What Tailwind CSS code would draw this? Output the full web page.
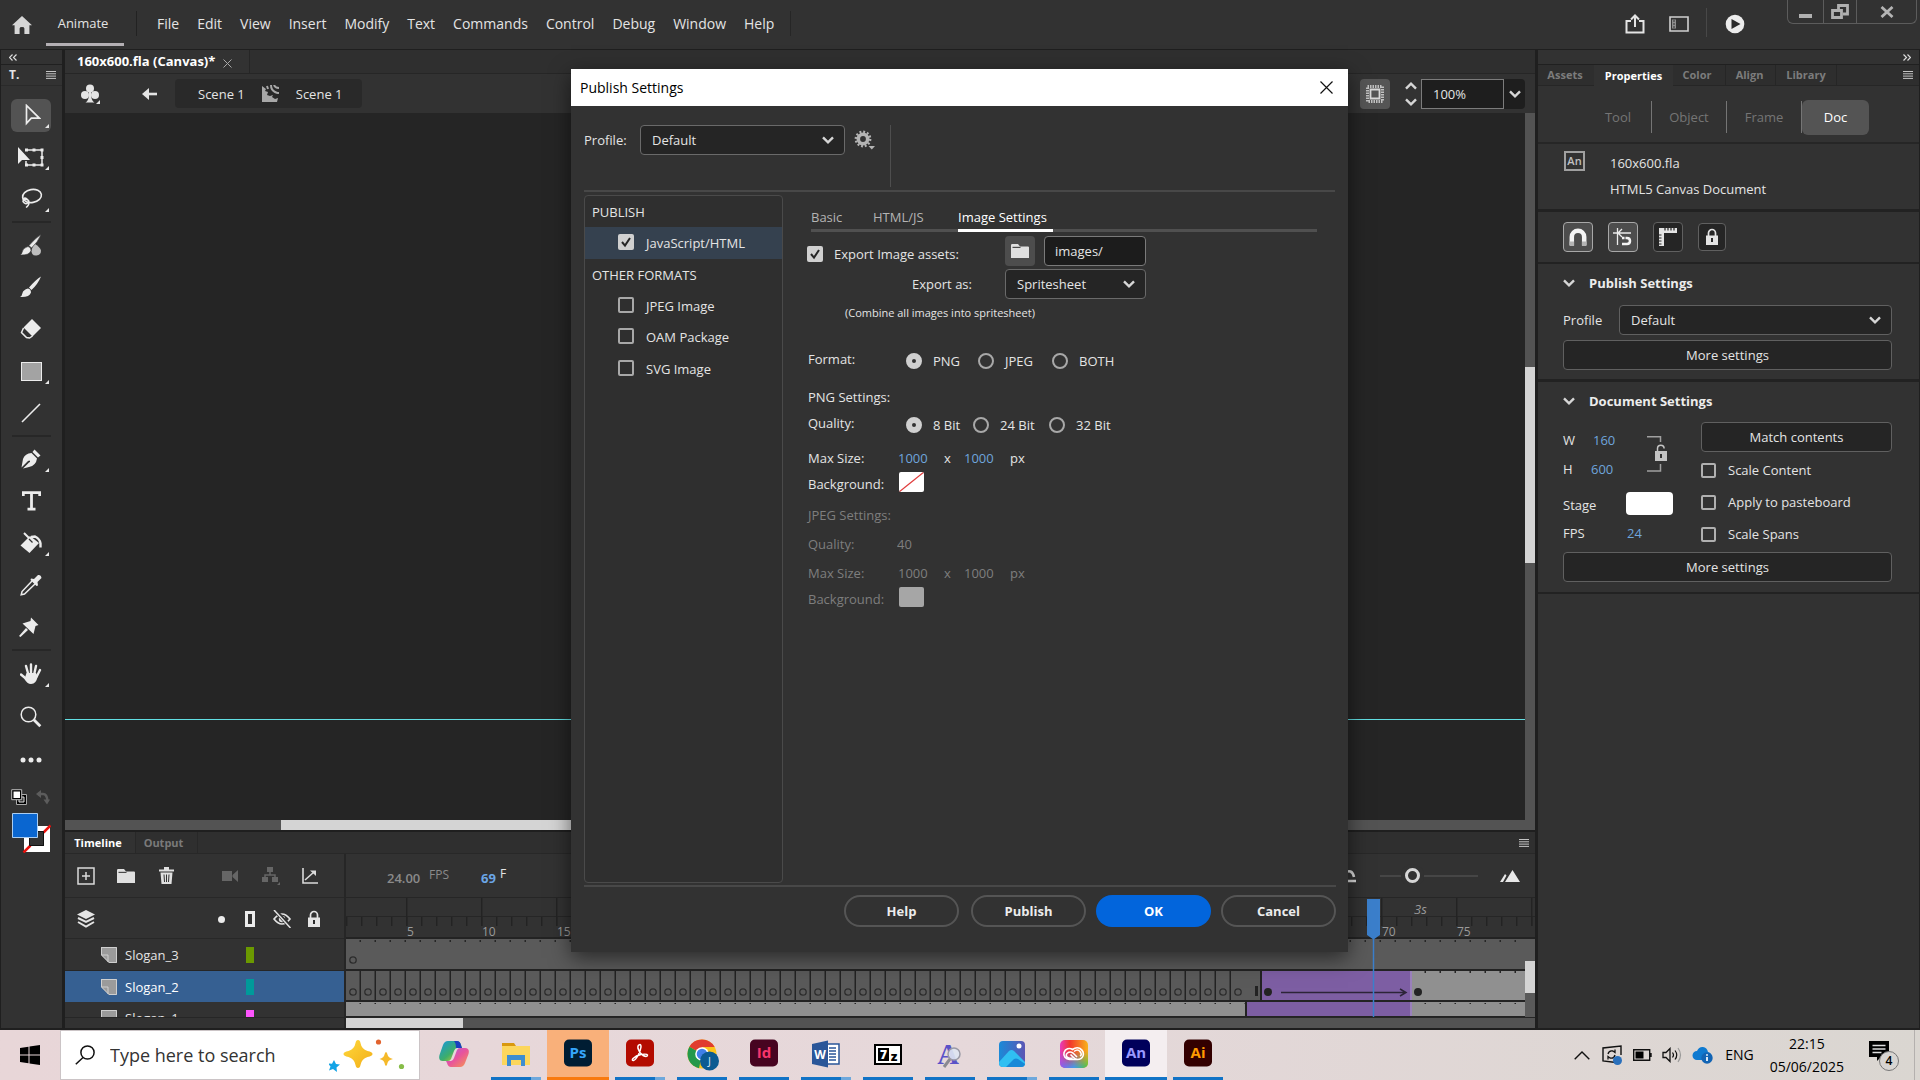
<!DOCTYPE html>
<html lang="en">
<head>
  <meta charset="UTF-8" />
  <meta name="viewport" content="width=device-width, initial-scale=1.0"/>
  <title>Animate - Publish Settings</title>
  <script src="https://cdn.jsdelivr.net/npm/@tailwindcss/browser@4"></script>
</head>
<body class="h-screen flex flex-col overflow-hidden bg-[#1f1f1f] text-[#e4e4e4] text-[13px] leading-5 font-['Open_Sans',sans-serif]">

  <!-- shared icons -->
  <svg class="hidden">
    <symbol id="chev" viewBox="0 0 12 8"><path d="M1 1.3l5 5 5-5" fill="none" stroke="#d6d6d6" stroke-width="2.4"/></symbol>
    <symbol id="check" viewBox="0 0 16 16"><path d="M4 8l3 3.6L12 4" fill="none" stroke="#252525" stroke-width="2"/></symbol>
    <symbol id="burger" viewBox="0 0 10 8"><path d="M0 .5h10M0 2.8h10M0 5.1h10M0 7.4h10" stroke="#c4c4c4" stroke-width="1"/></symbol>
    <symbol id="corner" viewBox="0 0 4 4"><path d="M4 0v4H0z" fill="#e8e8e8"/></symbol>
    <symbol id="folder" viewBox="0 0 20 16"><path d="M1 15V2.2Q1 1 2.2 1H8l2 2.6h8q1 0 1 1V15z" fill="#e0e0e0"/><path d="M2.5 4.4h8" stroke="#4a4a4a" stroke-width="1.2"/></symbol>
    <symbol id="lock" viewBox="0 0 14 18"><path d="M3.5 8V5a3.5 3.5 0 017 0v3" fill="none" stroke="#e4e4e4" stroke-width="1.7"/><path d="M1 7.5h12V17H1z" fill="#e4e4e4"/><path d="M7 10v4" stroke="#2a2a2a" stroke-width="2"/></symbol>
    <symbol id="layer" viewBox="0 0 16 16"><path d="M0 0h16v16H8L0 8z" fill="#9b9b9b"/><path d="M.5 0v8L8 15.5h7.5V.5H0M1 8h6v7" fill="none" stroke="#cfcfcf"/></symbol>
  </svg>

  <!-- menu bar -->
  <header class="h-[50px] shrink-0 flex bg-[#323232] border-b border-[#1f1f1f] text-sm">
    <a href="#" aria-label="Home" class="ml-3 mt-4">
      <svg class="w-5 h-[18px]" viewBox="0 0 20 18"><path d="M10 0L0 9.3h2.6V18h5v-5.600q0-1.400 2.400-1.400t2.400 1.400V18h5V9.300H20z" fill="#d6d6d6"/></svg>
    </a>
    <button class="ml-3.5 w-[78px] h-[46px] pt-1 pr-1 text-[13px] border-b-3 border-[#b4b0b4]">Animate</button>
    <div class="ml-3 mt-[11px] h-[25px] w-px bg-[#222]"></div>
    <nav class="ml-5 h-12 flex items-center gap-[18px]">
      <a href="#">File</a><a href="#">Edit</a><a href="#">View</a><a href="#">Insert</a><a href="#">Modify</a><a href="#">Text</a><a href="#">Commands</a><a href="#">Control</a><a href="#">Debug</a><a href="#">Window</a><a href="#">Help</a>
    </nav>
    <div class="ml-4 mt-[11px] h-[25px] w-px bg-[#262626]"></div>
    <div class="ml-auto flex items-center gap-6 h-12">
      <button aria-label="Share"><svg class="w-5 h-5" viewBox="0 0 20 20"><path d="M6 7H1.500v11.500h17V7H14M10 13V2M6 5.500l4-4 4 4" fill="none" stroke="#e4e4e4" stroke-width="2"/></svg></button>
      <button aria-label="Workspace"><svg class="w-5 h-4" viewBox="0 0 20 16"><path d="M1 1h18v14H1z" fill="none" stroke="#d0d0d0" stroke-width="1.600"/><path d="M3 3.500h4v9H3z" fill="#8e8e8e"/><path d="M4 5h2M4 8h2M4 11h2" stroke="#333"/></svg></button>
    </div>
    <div class="ml-[17px] mt-2 h-[29px] w-px bg-[#484848]"></div>
    <button aria-label="Test movie" class="ml-[18px] h-12"><svg class="w-5 h-5" viewBox="0 0 20 20"><circle cx="10" cy="10" r="9.300" fill="#ececec"/><path d="M6.500 5l9 5-9 5z" fill="#2b2b2b"/></svg></button>
    <div class="ml-[42px] mr-[3px] h-6 w-[130px] flex border border-t-0 border-[#5c5c5c] rounded-b-md">
      <button aria-label="Minimize" class="w-[35px] flex justify-center items-center"><span class="mt-2 w-[13px] h-1 bg-[#b0b0b0]"></span></button>
      <button aria-label="Restore" class="w-[34px] flex justify-center items-center border-x border-[#5c5c5c]"><svg class="w-[18px] h-4" viewBox="0 0 18 16"><path d="M7.500 5V1.500h9V10H12M1.500 6.500h9v7h-9z" fill="none" stroke="#b0b0b0" stroke-width="2.800"/></svg></button>
      <button aria-label="Close" class="flex-1 flex justify-center items-center"><svg class="w-3.5 h-3" viewBox="0 0 14 12"><path d="M1.500 1l11 10M12.500 1l-11 10" stroke="#b4b4b4" stroke-width="2.800"/></svg></button>
    </div>
  </header>

  <main class="flex-1 min-h-0 flex gap-[3px] pb-0.5 relative">

    <!-- tools -->
    <aside class="w-[62px] shrink-0 bg-[#323232] border-l border-[#1f1f1f] flex flex-col items-center">
      <div class="w-full h-[15px] border-b border-[#202020] pl-2 pt-1"><svg class="w-2 h-[7px]" viewBox="0 0 8 7"><path d="M3.500.5l-3 3 3 3M7.500.5l-3 3 3 3" fill="none" stroke="#dedede" stroke-width="1.200"/></svg></div>
      <div class="w-full h-[21px] pl-2 pr-1.5 flex items-center justify-between border-b border-[#2a2a2a]"><b class="text-xs">T.</b><svg class="w-2.5 h-2"><use href="#burger"/></svg></div>
      <div class="mt-2 mr-px flex flex-col items-center">
        <button aria-label="Selection" class="w-10 h-[42px] flex items-center justify-center relative"><span class="w-10 h-[33px] rounded-md bg-[#535353] flex items-center justify-center"><svg class="ml-1 w-4 h-[22px]" viewBox="0 0 16 22"><path d="M1.500 1.500v17.800l4.800-5.200h8z" fill="none" stroke="#ececec" stroke-width="1.700"/></svg></span><svg class="absolute right-0.5 bottom-2 w-1 h-1"><use href="#corner"/></svg></button>
        <button aria-label="Free transform" class="w-10 h-[42px] flex items-center justify-center relative"><svg class="w-7 h-[22px]" viewBox="0 0 28 22"><path d="M1 1v17l4-4h8z" fill="#ececec"/><path d="M9 4h16v15H9v-4" fill="none" stroke="#ececec" stroke-width="1.500"/><path d="M8 2.500h3v3H8zM15.500 2.500h3v3h-3zM23.500 2.500h3v3h-3zM23.500 10h3v3h-3zM23.500 17.500h3v3h-3zM15.500 17.500h3v3h-3zM8 17.500h3v3H8z" fill="#ececec"/></svg><svg class="absolute right-0.5 bottom-2 w-1 h-1"><use href="#corner"/></svg></button>
        <button aria-label="Lasso" class="w-10 h-[42px] flex items-center justify-center relative"><svg class="w-6 h-[22px]" viewBox="0 0 24 22"><ellipse cx="13" cy="8" rx="9.500" ry="6.500" fill="none" stroke="#ececec" stroke-width="1.600" transform="rotate(-10 13 8)"/><path d="M3.500 11.500q2-2.500 4.500-.5t.5 4-4.500-1.500q0-2 3-2t3 3-3 5" fill="none" stroke="#ececec" stroke-width="1.500"/></svg><svg class="absolute right-0.5 bottom-2 w-1 h-1"><use href="#corner"/></svg></button>
        <div class="w-[39px] h-0.5 my-px bg-[#272727]"></div>
        <button aria-label="Fluid brush" class="w-10 h-[42px] flex items-center justify-center"><svg class="w-[22px] h-[22px]" viewBox="0 0 22 22"><path d="M15 10q5 3 6 6.500 0 4.500-4.500 5t-5-4q0-4 3.500-7.500z" fill="#bdbdbd"/><path d="M21 .5q-5 3-12 11l2.500 2.500Q18 8 21 .5zM8 12.500q3 .5 3 4-1.500 5-11 4.500 2-1 2.500-4t5.500-4.500z" fill="#ececec" stroke="#323232" stroke-width=".6"/></svg></button>
        <button aria-label="Brush" class="w-10 h-[42px] flex items-center justify-center"><svg class="w-[22px] h-[22px]" viewBox="0 0 22 22"><path d="M21 .5q-5 3-12 11l2.500 2.500Q18 8 21 .5zM8 12.500q3 .5 3 4-1.500 5-11 4.500 2-1 2.500-4t5.500-4.500z" fill="#ececec"/></svg></button>
        <button aria-label="Eraser" class="w-10 h-[42px] flex items-center justify-center"><svg class="w-[22px] h-[22px]" viewBox="0 0 22 22"><path d="M12 1l9 9-8.500 8.500-9-9z" fill="#ececec"/><path d="M3.500 10L1.500 14.500l5 5 3 .5 3-2" fill="none" stroke="#ececec" stroke-width="1.500"/></svg></button>
        <button aria-label="Rectangle" class="w-10 h-[42px] flex items-center justify-center relative"><span class="w-[21px] h-[19px] bg-[#a3a3a3] border border-[#ececec]"></span><svg class="absolute right-0.5 bottom-2 w-1 h-1"><use href="#corner"/></svg></button>
        <button aria-label="Line" class="w-10 h-[42px] flex items-center justify-center"><svg class="w-5 h-5" viewBox="0 0 20 20"><path d="M1 19L19 1" stroke="#ececec" stroke-width="1.600"/></svg></button>
        <div class="w-[39px] h-0.5 my-px bg-[#272727]"></div>
        <button aria-label="Pen" class="w-10 h-[42px] flex items-center justify-center relative"><svg class="w-[22px] h-[22px]" viewBox="0 0 22 22"><path d="M14.500 1.500l6 6-2.500 2-5.500-5.500z" fill="#ececec"/><path d="M11.500 5l5.500 5.500q-1 7-8 8.500L3 20.500l6-6q1.500-.5 1-1.500t-2 0l-6.500 6.500L3 11q2-5.500 8.500-6z" fill="#ececec"/></svg><svg class="absolute right-0.5 bottom-2 w-1 h-1"><use href="#corner"/></svg></button>
        <button aria-label="Text" class="w-10 h-[42px] flex items-center justify-center"><svg class="w-[19px] h-5" viewBox="0 0 19 20"><path d="M1.300 5V1.700h16.400V5M9.500 1.700v16.500M5.500 18.200h8" fill="none" stroke="#ececec" stroke-width="2.800"/></svg></button>
        <button aria-label="Paint bucket" class="w-10 h-[42px] flex items-center justify-center relative"><svg class="w-[22px] h-[22px]" viewBox="0 0 22 22"><path d="M10 4l9 7-9.500 10L.5 13.500z" fill="#ececec"/><path d="M4 1l7 7" stroke="#ececec" stroke-width="2"/><path d="M9 7l3.500 3.500" stroke="#323232" stroke-width="1.200"/><path d="M11 5l4-.5q5 2.500 5.500 7v4" fill="none" stroke="#ececec" stroke-width="2.400"/></svg><svg class="absolute right-0.5 bottom-2 w-1 h-1"><use href="#corner"/></svg></button>
        <button aria-label="Eyedropper" class="w-10 h-[42px] flex items-center justify-center"><svg class="w-[22px] h-[22px]" viewBox="0 0 22 22"><path d="M12 7l-10 10.500-.8 3.300 3.300-.8L15 10" fill="none" stroke="#ececec" stroke-width="1.500"/><path d="M11 4.500l3 .5 4-4q3-.5 3.500 3l-4 4 .5 3.500-1.500.5L10.500 6z" fill="#ececec"/></svg></button>
        <button aria-label="Asset warp" class="w-10 h-[42px] flex items-center justify-center"><svg class="mr-1 w-5 h-5" viewBox="0 0 20 20"><path d="M12 .5l7.500 7.500-3 1-2 8L3.500 6.500l8-2.500zM7 11l2 2-7.500 7L0 19z" fill="#ececec"/></svg></button>
        <div class="w-[39px] h-0.5 my-px bg-[#272727]"></div>
        <button aria-label="Hand" class="w-10 h-[43px] flex items-center justify-center relative"><svg class="w-[22px] h-[22px]" viewBox="0 0 22 22"><path d="M1 11.500l6 5M6 3l2.500 9M11 1.500v10M16 3l-2 9M20 7l-4 8" stroke="#ececec" stroke-width="2.400" stroke-linecap="round"/><path d="M6.500 10h9.500l1.500 3q-1 8-6.500 8-4 0-6.500-5z" fill="#ececec"/></svg><svg class="absolute right-0.5 bottom-2 w-1 h-1"><use href="#corner"/></svg></button>
        <button aria-label="Zoom" class="w-10 h-[43px] flex items-center justify-center"><svg class="w-[22px] h-[22px]" viewBox="0 0 22 22"><circle cx="8.500" cy="8.500" r="7.300" fill="none" stroke="#ececec" stroke-width="1.500"/><path d="M13.800 13.800l6.500 6.500" stroke="#ececec" stroke-width="2.800"/></svg></button>
        <button aria-label="More tools" class="w-10 h-[43px] flex items-center justify-center"><svg class="w-[22px] h-2" viewBox="0 0 22 8"><circle cx="3" cy="4" r="2.500" fill="#ececec"/><circle cx="11" cy="4" r="2.500" fill="#ececec"/><circle cx="19" cy="4" r="2.500" fill="#ececec"/></svg></button>
      </div>
      <div class="mt-2 mr-0.5 w-[39px] flex justify-between">
        <svg class="w-4 h-4" viewBox="0 0 16 16"><path d="M5.500 5.500h10v10h-10z" fill="#000" stroke="#aaa"/><path d="M8 8h5v5H8z" fill="#323232" stroke="#ddd"/><path d="M.7.700h10v10h-10z" fill="#000" stroke="#bbb"/><path d="M2.500 2.500h6.500V9H2.500z" fill="#fff"/></svg>
        <svg class="w-3.5 h-4" viewBox="0 0 14 16"><path d="M2 5h5q4 0 4.500 7" fill="none" stroke="#5c5c5c" stroke-width="2.500"/><path d="M5 1v8L0 5zM7.500 10.500H14l-3 5z" fill="#5c5c5c"/></svg>
      </div>
      <svg class="mt-2 mr-px w-[39px] h-10" viewBox="0 0 39 40"><path d="M15 16h20v20H15z" fill="none" stroke="#fff" stroke-width="6"/><path d="M11.500 39.500l7-7M31.500 19.500l7-7" stroke="#e8100c" stroke-width="2.500"/><path d="M17.500 18.500h14v14h-14z" fill="#323232" stroke="#111"/><path d="M.5.500h25v24H.5z" fill="#0a66d0" stroke="#a9cdf2"/></svg>
    </aside>

    <!-- stage and timeline -->
    <div class="flex-1 min-w-0 flex flex-col gap-0.5">
      <section class="flex-1 min-h-0 flex flex-col bg-[#323232]">
        <div class="h-6 shrink-0 flex bg-[#2f2f2f] border-b border-[#262626]">
          <div class="w-[185px] pl-3 pb-px flex items-center gap-2 bg-[#323232] border-r border-[#262626] font-bold text-[13px] text-white whitespace-nowrap">160x600.fla (Canvas)*<button aria-label="Close tab"><svg class="mt-1 w-[9px] h-[9px]" viewBox="0 0 9 9"><path d="M.5.500l8 8M8.500.5l-8 8" stroke="#a8a8a8"/></svg></button></div>
        </div>
        <div class="h-[39px] shrink-0 flex items-center">
          <svg class="ml-4 w-[19px] h-5" viewBox="0 0 19 20"><circle cx="9" cy="4.500" r="4" fill="#e4e4e4"/><circle cx="4" cy="11" r="4" fill="#e4e4e4"/><circle cx="14" cy="11" r="4" fill="#e4e4e4"/><path d="M8 7h2v4q.5 6 3.500 7.500h-9Q7.500 17 8 11zM19 16v4h-4z" fill="#e4e4e4"/></svg>
          <button aria-label="Back" class="ml-[42px]"><svg class="w-4 h-3" viewBox="0 0 16 12"><path d="M7 0v12L0 6z" fill="#e4e4e4"/><path d="M5 6h10" stroke="#e4e4e4" stroke-width="2.600"/></svg></button>
          <div class="ml-[17px] w-[187px] h-[29px] pl-[23px] flex items-center rounded bg-[#292929]">
            <a href="#">Scene 1</a>
            <svg class="mx-[17px] w-[17px] h-[17px]" viewBox="0 0 17 17"><path d="M0 1v16h15l1-4-3 1-3-2 1-2-3 1-3-1 1-3-3-1 1-2z" fill="#a8a8a8"/><path d="M5 1l1 3M9 0q0 5 4 7t4 0M12 0q1 3 5 3" fill="none" stroke="#a8a8a8" stroke-width="2"/></svg>
            <a href="#">Scene 1</a>
          </div>
          <button aria-label="Clip content" class="ml-auto w-[30px] h-[30px] rounded bg-[#555] flex items-center justify-center"><svg class="w-[18px] h-[18px]" viewBox="0 0 18 18"><rect x="1.500" y="1.500" width="15" height="15" fill="none" stroke="#c0c0c0" stroke-width="3" stroke-dasharray="1.500 1"/><path d="M4.500 4.500h9v9h-9z" fill="none" stroke="#d8d8d8" stroke-width="1.800"/></svg></button>
          <div class="ml-3 mr-0.5 w-[17px] flex flex-col items-center gap-2"><svg class="w-3 h-2 rotate-180"><use href="#chev"/></svg><svg class="w-3 h-2"><use href="#chev"/></svg></div>
          <input aria-label="Zoom level" value="100%" class="w-[83px] h-[30px] pl-[11px] bg-[#1e1e1e] border border-[#7c7c7c]"/>
          <button aria-label="Zoom presets" class="mr-2.5 w-[21px] h-[30px] flex items-center justify-center bg-[#1e1e1e] rounded-r"><svg class="w-3 h-2"><use href="#chev"/></svg></button>
        </div>
        <div class="flex-1 min-h-0 flex">
          <div class="flex-1 bg-[#252525] relative"><div class="absolute inset-x-0 top-[606px] h-px bg-[#62dfe3]"></div></div>
          <div class="w-2.5 bg-[#535353] pt-[254px]"><div class="h-[196px] bg-[#d4d4d4]"></div></div>
        </div>
        <div class="h-2.5 shrink-0 bg-[#535353] pl-[216px] pr-2.5"><div class="h-full w-2/3 bg-[#d4d4d4]"></div></div>
      </section>

      <section class="h-[196px] shrink-0 flex flex-col bg-[#323232]">
        <div class="h-[22px] shrink-0 flex items-stretch border-b border-[#282828] text-[11px] font-bold bg-[#2f2f2f]">
          <button class="w-[70px] pr-1 bg-[#323232] text-white">Timeline</button>
          <button class="w-[63px] pr-1.5 border-x border-[#282828] text-[#7a7a7a]">Output</button>
          <button aria-label="Timeline menu" class="ml-auto mr-1.5"><svg class="w-2.5 h-2"><use href="#burger"/></svg></button>
        </div>
        <div class="flex-1 min-h-0 flex">
          <div class="w-[281px] shrink-0 border-r-2 border-[#262626] flex flex-col">
            <div class="h-11 shrink-0 pl-3 flex items-center border-b border-[#282828]">
              <button aria-label="New layer"><svg class="w-[18px] h-[18px]" viewBox="0 0 18 18"><path d="M1 1h16v16H1zM9 5v8M5 9h8" fill="none" stroke="#dadada" stroke-width="1.500"/></svg></button>
              <button aria-label="New folder" class="ml-[21px]"><svg class="w-5 h-4"><use href="#folder"/></svg></button>
              <button aria-label="Delete" class="ml-[23px]"><svg class="w-[15px] h-[17px]" viewBox="0 0 15 17"><path d="M0 2.500h15v2H0zM5 0h5v3H5zM1.500 5.500h12L12.500 17h-10z" fill="#e0e0e0"/><path d="M5 7.500l.5 7.500M7.500 7.500V15M10 7.500L9.500 15" stroke="#323232"/></svg></button>
              <button aria-label="Camera" class="ml-12"><svg class="w-4 h-3" viewBox="0 0 16 12"><path d="M0 1h10v10H0zM10.500 5L16 0v12l-5.500-5z" fill="#666"/></svg></button>
              <button aria-label="Parenting" class="ml-6"><svg class="w-[18px] h-[18px]" viewBox="0 0 18 18"><path d="M5 0h6v5H5zM0 10h6v5H0zM10 10h6v5h-6zM18 15v3h-3z" fill="#666"/><path d="M8 5v3M3 10V8h10v2" fill="none" stroke="#666" stroke-width="1.500"/></svg></button>
              <button aria-label="Graph" class="ml-[22px]"><svg class="w-4 h-4" viewBox="0 0 16 16"><path d="M1 0v15h15M3 12l9-8" fill="none" stroke="#dadada" stroke-width="1.600"/><path d="M8 2.500h6V8z" fill="#dadada"/></svg></button>
            </div>
            <div class="h-[41px] shrink-0 pl-3 pt-0.5 flex items-center border-b border-[#282828]">
              <svg class="w-[18px] h-[18px]" viewBox="0 0 18 18"><path d="M9 0l9 4.500L9 9 0 4.500z" fill="#e4e4e4"/><path d="M1 8l8 4 8-4M1 12l8 4.500L17 12" fill="none" stroke="#e4e4e4" stroke-width="2"/></svg>
              <span class="ml-[123px] w-[7px] h-[7px] rounded-full bg-[#ececec]"></span>
              <span class="ml-5 w-2.5 h-4 border-3 border-[#ececec]"></span>
              <svg class="ml-[18px] w-[18px] h-[18px]" viewBox="0 0 18 18"><path d="M1 9q8-10 16 0-8 10-16 0z" fill="none" stroke="#e4e4e4" stroke-width="1.700"/><circle cx="9" cy="9" r="3.200" fill="#e4e4e4"/><path d="M1.500 0l16 17" stroke="#323232" stroke-width="4"/><path d="M1 0l16.500 18" stroke="#e4e4e4" stroke-width="1.500"/></svg>
              <svg class="ml-4 w-3.5 h-[18px]"><use href="#lock"/></svg>
            </div>
            <ul class="flex-1 min-h-0 overflow-hidden">
              <li class="h-8 pl-9 flex items-center border-b border-[#262626]"><svg class="w-4 h-4"><use href="#layer"/></svg><span class="ml-2 w-[121px]">Slogan_3</span><span class="w-2 h-4 bg-[#6b9900]"></span></li>
              <li class="h-[31px] pl-9 flex items-center bg-[#366092] text-white"><svg class="w-4 h-4"><use href="#layer"/></svg><span class="ml-2 w-[121px]">Slogan_2</span><span class="w-2 h-4 bg-[#009a9a]"></span></li>
              <li class="h-8 pl-9 flex items-center"><svg class="w-4 h-4"><use href="#layer"/></svg><span class="ml-2 w-[121px]">Slogan_1</span><span class="w-2 h-4 bg-[#fc54fc]"></span></li>
            </ul>
            <div class="h-[11px] shrink-0 border-t border-[#262626]"></div>
          </div>

          <div class="flex-1 min-w-0 flex flex-col relative">
            <div class="h-11 shrink-0 flex items-center border-b border-[#262626]">
              <input aria-label="Frame rate" value="24.00" class="ml-[41px] mt-1 w-[42px] font-semibold text-[#8a8a8a]"/><span class="mb-0.5 text-xs text-[#8a8a8a]">FPS</span>
              <input aria-label="Current frame" value="69" class="ml-8 mt-1 w-[19px] font-bold text-[#6ba6e6]"/><span class="text-xs mb-1">F</span>
              <svg class="ml-auto w-3.5 h-4" viewBox="0 0 14 16"><path d="M1 5q8-5 10 4M5 13h8" fill="none" stroke="#dadada" stroke-width="2.500"/></svg>
              <input aria-label="Frame size" type="range" value="30" class="ml-[23px] w-[98px] h-0.5 appearance-none bg-[#464646] [&::-webkit-slider-thumb]:appearance-none [&::-webkit-slider-thumb]:w-[15px] [&::-webkit-slider-thumb]:h-[15px] [&::-webkit-slider-thumb]:rounded-full [&::-webkit-slider-thumb]:bg-[#323232] [&::-webkit-slider-thumb]:border-3 [&::-webkit-slider-thumb]:border-[#d6d6d6] [&::-webkit-slider-thumb]:shadow-[0_0_0_4px_#323232]"/>
              <svg class="ml-[22px] mr-[15px] w-5 h-3" viewBox="0 0 20 12"><path d="M5 12L12.500 0 20 12zM0 12l5-8 1.500 1.500L3 12z" fill="#e8e8e8"/></svg>
            </div>
            <svg id="ruler" class="w-full h-[41px] shrink-0">
              <defs>
                <pattern id="minor" width="15" height="41" patternUnits="userSpaceOnUse"><path d="M0 19h1.500v9H0z" fill="#232323"/></pattern>
                <pattern id="major" x="60" width="75" height="41" patternUnits="userSpaceOnUse"><path d="M0 0h1.500v28H0z" fill="#232323"/></pattern>
              </defs>
              <rect y="18" width="100%" height="1" fill="#262626"/>
              <rect width="100%" height="41" fill="url(#minor)"/>
              <rect width="100%" height="41" fill="url(#major)"/>
              <rect y="39" width="100%" height="2" fill="#232323"/>
            </svg>
            <div class="flex-1 min-h-0 flex">
              <svg class="flex-1 h-full">
                <defs>
                  <pattern id="tick" width="15" height="100" patternUnits="userSpaceOnUse"><path d="M13.500 0h1.500v100h-1.500z" fill="#262626"/></pattern>
                  <pattern id="cell" y="32" width="15" height="29" patternUnits="userSpaceOnUse"><path d="M0 0h15v29H0z" fill="#5a5a5a"/><path d="M13.500 0h1.500v29h-1.500z" fill="#232323"/><circle cx="7" cy="21" r="3.200" fill="none" stroke="#2c2c2c" stroke-width="1.300"/></pattern>
                </defs>
                <rect width="100%" height="100%" fill="#232323"/>
                <rect width="100%" height="30" fill="#5a5a5a"/>
                <rect y="1" width="100%" height="2" fill="url(#tick)"/>
                <circle cx="7" cy="21" r="3.200" fill="none" stroke="#2c2c2c" stroke-width="1.300"/>
                <rect y="32" width="100%" height="29" fill="#909090"/>
                <rect y="32" width="885" height="29" fill="url(#cell)"/>
                <rect x="885" y="32" width="30" height="29" fill="#5a5a5a"/>
                <circle cx="892" cy="53" r="3.200" fill="none" stroke="#2c2c2c" stroke-width="1.300"/>
                <path d="M909 47h3v10h-3zM914 32h3v29h-3z" fill="#232323"/>
                <rect y="63" width="100%" height="14" fill="#909090"/>
                <rect x="1065" y="32" width="100%" height="2" fill="url(#tick)"/>
                <rect y="64" width="100%" height="1" fill="url(#tick)"/>
                <path d="M916 32h150v29H916zM900 63h166v14H900z" fill="#7d5ea3"/>
                <path d="M1064 32h2v29h-2zM1064 63h2v14h-2z" fill="#9a80bb"/>
                <path d="M899 63h2v14h-2z" fill="#232323"/>
                <circle cx="922" cy="53" r="4" fill="#232323"/><circle cx="1072" cy="53" r="4" fill="#232323"/>
                <path d="M935 53.500h124M1054 50l6 3.500-6 3.500" fill="none" stroke="#2c2438" stroke-width="1.500"/>
              </svg>
              <div class="w-2.5 bg-[#5a5a5a] pt-[22px]"><div class="h-8 bg-[#d4d4d4]"></div></div>
            </div>
            <div class="h-[11px] shrink-0 bg-[#535353] border-t border-[#262626]"><div class="w-[117px] h-full bg-[#d4d4d4]"></div></div>
            <svg class="absolute left-[1021px] top-11 w-3.5 h-[119px]" viewBox="0 0 14 119"><path d="M0 1h13v36l-6.500 4.500L0 37z" fill="#3b7fcb"/><path d="M6.500 40v79" stroke="#3b7fcb" stroke-width="1.500"/></svg>
          </div>
        </div>
      </section>
    </div>

    <!-- properties -->
    <aside class="w-[382px] shrink-0 bg-[#323232] border-r border-[#1f1f1f] flex flex-col">
      <div class="h-[15px] shrink-0 pr-2 pt-1 flex justify-end border-b border-[#202020]"><svg class="w-2 h-[7px]" viewBox="0 0 8 7"><path d="M.5.500l3 3-3 3M4.500.5l3 3-3 3" fill="none" stroke="#dedede" stroke-width="1.200"/></svg></div>
      <div class="h-[21px] shrink-0 flex bg-[#2e2e2e] text-[11px] font-bold text-[#7c7c7c] *:border-[#262626]">
        <button class="w-14 pr-0.5 border-b">Assets</button>
        <button class="w-[79px] bg-[#323232] text-white">Properties</button>
        <button class="w-[53px] border-b border-r pr-1">Color</button>
        <button class="w-[50px] border-b border-r pr-0.5">Align</button>
        <button class="w-[61px] border-b border-r">Library</button>
        <div class="flex-1 border-b pr-1.5 flex justify-end items-center"><svg class="w-2.5 h-2"><use href="#burger"/></svg></div>
      </div>
      <div class="h-[58px] shrink-0 pl-[47px] pt-1.5 flex items-center border-b-2 border-[#262626] text-[#757575]">
        <button class="w-[67px] h-8 border-r border-[#757575]">Tool</button>
        <button class="w-[75px] h-8 border-r border-[#757575]">Object</button>
        <button class="w-[75px] h-8 border-r border-[#757575]">Frame</button>
        <button class="w-[67px] h-[35px] rounded-md bg-[#545454] text-white">Doc</button>
      </div>
      <div class="h-[68px] shrink-0 pl-[26px] pt-[7px] flex border-b-3 border-[#222]">
        <span class="w-[21px] h-5 border-2 border-[#a0a0a0] text-[11px] leading-4 text-center font-semibold text-[#c0c0c0]">An</span>
        <div class="ml-[25px] -mt-px leading-[26px]"><p>160x600.fla</p><p>HTML5 Canvas Document</p></div>
      </div>
      <div class="h-[52px] shrink-0 pl-[25px] flex items-center gap-[15px] border-b-2 border-[#222]">
        <button aria-label="Snap to objects" class="w-[30px] h-[30px] rounded border border-[#a8a8a8] bg-[#4d4d4d] flex items-center justify-center"><svg class="w-[18px] h-[18px]" viewBox="0 0 18 18"><path d="M2.800 17V9a6.200 6.200 0 0112.400 0v8" fill="none" stroke="#f4f4f4" stroke-width="4.500"/><path d="M.5 13.500h4.600V18H.5zM12.900 13.500h4.600V18h-4.600z" fill="#b4b4b4"/></svg></button>
        <button aria-label="Snap align" class="w-[30px] h-[30px] rounded border border-[#a8a8a8] bg-[#4d4d4d] flex items-center justify-center"><svg class="w-5 h-5" viewBox="0 0 20 20"><path d="M0 6h18M4.500 1v17M9 2L5 6l4 4" fill="none" stroke="#ececec" stroke-width="1.300"/><path d="M9 11h5q3 0 3 3t-3 3H9" fill="none" stroke="#f4f4f4" stroke-width="2.500" stroke-dasharray="2.500 1 16 1 3"/></svg></button>
        <button aria-label="Rulers" class="w-[30px] h-[30px] rounded border border-[#606060] bg-[#252525] flex items-center justify-center"><svg class="w-5 h-5" viewBox="0 0 20 20"><path d="M1 1h18v5H6v13H1z" fill="#e4e4e4"/><path d="M7 3.500V1M10 3.500V1M13 3.500V1M16 3.500V1M3.500 8H1M3.500 11H1M3.500 14H1M3.500 17H1" stroke="#252525" stroke-width="1.200"/></svg></button>
        <button aria-label="Lock guides" class="w-7 h-7 rounded border border-[#606060] bg-[#252525] flex items-center justify-center"><svg class="w-3.5 h-[18px]"><use href="#lock"/></svg></button>
      </div>

      <section class="pt-2 pl-[25px] pr-[27px] pb-[9px] border-b-3 border-[#222]">
        <button class="h-[22px] flex items-center gap-3.5 font-bold text-[#ececec]"><svg class="w-3 h-2"><use href="#chev"/></svg>Publish Settings</button>
        <div class="mt-[11px] flex items-center">
          <label for="docProfile" class="w-14">Profile</label>
          <div class="flex-1 relative">
            <select id="docProfile" class="w-full h-[30px] pl-[11px] appearance-none rounded border border-[#606060] bg-[#252525]"><option>Default</option></select>
            <svg class="absolute right-[11px] top-[11px] w-3 h-2 pointer-events-none"><use href="#chev"/></svg>
          </div>
        </div>
        <button class="mt-[5px] w-full h-[30px] rounded border border-[#606060] bg-[#252525]">More settings</button>
      </section>

      <section class="pt-2 pl-[25px] pr-[27px] pb-2.5 border-b-2 border-[#222]">
        <button class="h-[22px] flex items-center gap-3.5 font-bold text-[#ececec]"><svg class="w-3 h-2"><use href="#chev"/></svg>Document Settings</button>
        <div class="mt-2.5 flex">
          <div class="w-[138px]">
            <div class="flex">
              <div class="w-[84px]">
                <div class="h-9 flex items-center justify-between"><label for="docW">W</label><input id="docW" value="160" class="w-[54px] text-[#6fa5dc]"/></div>
                <div class="h-[22px] flex items-center justify-between"><label for="docH">H</label><input id="docH" value="600" class="w-[56px] text-[#6fa5dc]"/></div>
              </div>
              <svg class="mt-3.5 w-[21px] h-9" viewBox="0 0 21 36"><path d="M0 .8h13.500V6M0 35h13.500v-7" fill="none" stroke="#a0a0a0" stroke-width="1.500"/><path d="M10.500 16v-3.500a3.300 3.300 0 016.600 0" fill="none" stroke="#c4c4c4" stroke-width="1.500"/><path d="M8 15h12v10H8z" fill="#c4c4c4"/><path d="M14 18v4" stroke="#333" stroke-width="2"/></svg>
            </div>
            <div class="mt-3.5 h-[22px] flex items-center"><label for="stage" class="w-[63px]">Stage</label><button id="stage" aria-label="Stage colour" class="w-[47px] h-[23px] -mt-1 rounded bg-white"></button></div>
            <div class="mt-1.5 h-[22px] flex items-center"><label for="docFps" class="w-16">FPS</label><input id="docFps" value="24" class="w-8 text-[#6fa5dc]"/></div>
          </div>
          <div class="flex-1">
            <button class="w-full h-[30px] rounded border border-[#606060] bg-[#252525]">Match contents</button>
            <label class="mt-[7px] h-[22px] flex items-center gap-3"><input type="checkbox" class="appearance-none w-[15px] h-[15px] rounded-xs border-2 border-[#b0b0b0]"/>Scale Content</label>
            <label class="mt-2.5 h-[22px] flex items-center gap-3"><input type="checkbox" class="appearance-none w-[15px] h-[15px] rounded-xs border-2 border-[#b0b0b0]"/>Apply to pasteboard</label>
            <label class="mt-2.5 h-[22px] flex items-center gap-3"><input type="checkbox" class="appearance-none w-[15px] h-[15px] rounded-xs border-2 border-[#b0b0b0]"/>Scale Spans</label>
          </div>
        </div>
        <button class="mt-[7px] w-full h-[30px] rounded border border-[#606060] bg-[#252525]">More settings</button>
      </section>
    </aside>

    <!-- publish settings dialog -->
    <form role="dialog" aria-label="Publish Settings" class="absolute left-[571px] top-[19px] w-[777px] h-[883px] flex flex-col bg-[#323232] shadow-[0_6px_20px_rgba(0,0,0,0.55)]" onsubmit="return false">
      <div class="h-[37px] shrink-0 pl-[9px] pr-[15px] flex items-center justify-between bg-white text-black text-sm">Publish Settings<button type="button" aria-label="Close"><svg class="w-[13px] h-[13px]" viewBox="0 0 13 13"><path d="M.5.500l12 12M12.500.5l-12 12" stroke="#111" stroke-width="1.200"/></svg></button></div>
      <div class="mx-[13px] h-[86px] shrink-0 pt-[19px] flex items-start border-b-2 border-[#484848]">
        <label for="profile" class="w-14 mt-[5px]">Profile:</label>
        <div class="w-[205px] relative">
          <select id="profile" class="w-full h-[30px] pl-[11px] appearance-none rounded border border-[#6a6a6a] bg-[#252525]"><option>Default</option></select>
          <svg class="absolute right-[11px] top-[11px] w-3 h-2 pointer-events-none"><use href="#chev"/></svg>
        </div>
        <button type="button" aria-label="Profile options" class="ml-[9px] mt-[5px]"><svg class="w-[21px] h-5" viewBox="0 0 21 20"><circle cx="9" cy="9" r="7.200" fill="none" stroke="#b4b4b4" stroke-width="2.400" stroke-dasharray="1.900 1.870"/><circle cx="9" cy="9" r="4.700" fill="none" stroke="#b4b4b4" stroke-width="3.600"/><path d="M14.500 16H21l-3.200 3.500z" fill="#b4b4b4"/></svg></button>
        <div class="ml-[15px] w-px h-[62px] bg-[#4e4e4e]"></div>
      </div>

      <div class="flex-1 min-h-0 mx-[13px] pt-[3px] pb-0.5 flex">
        <div class="w-[199px] shrink-0 rounded border border-[#4a4a4a] bg-[#2f2f2f]">
          <h3 class="h-[31px] pl-[7px] flex items-center">PUBLISH</h3>
          <label class="h-8 pl-[33px] flex items-center gap-3 bg-[#35414f]"><span class="grid mb-0.5"><input type="checkbox" checked class="col-start-1 row-start-1 appearance-none w-4 h-4 rounded-xs bg-[#d0d0d0]"/><svg class="col-start-1 row-start-1 w-4 h-4 pointer-events-none"><use href="#check"/></svg></span>JavaScript/HTML</label>
          <h3 class="h-[31px] pl-[7px] flex items-center">OTHER FORMATS</h3>
          <label class="h-[31px] pl-[33px] flex items-center gap-3"><input type="checkbox" class="appearance-none w-4 h-4 mb-0.5 rounded-xs border-2 border-[#a8a8a8]"/>JPEG Image</label>
          <label class="h-8 pl-[33px] flex items-center gap-3"><input type="checkbox" class="appearance-none w-4 h-4 mb-0.5 rounded-xs border-2 border-[#a8a8a8]"/>OAM Package</label>
          <label class="h-[31px] pl-[33px] flex items-center gap-3"><input type="checkbox" class="appearance-none w-4 h-4 mb-0.5 rounded-xs border-2 border-[#a8a8a8]"/>SVG Image</label>
        </div>

        <div class="flex-1 pl-6">
          <div class="ml-1 mr-[18px] h-[37px] flex items-end border-b-3 border-[#505050] text-[#b4b4b4] text-left">
            <button type="button" class="w-[62px] pb-0.5 text-left">Basic</button>
            <button type="button" class="w-[85px] pb-0.5 text-left">HTML/JS</button>
            <button type="button" class="w-[95px] -mb-[3px] pb-0.5 text-left text-white border-b-3 border-white">Image Settings</button>
          </div>
          <div class="mt-1 h-[30px] flex items-center">
            <label class="w-[198px] pt-1.5 flex items-center gap-[11px]"><span class="grid"><input type="checkbox" checked class="col-start-1 row-start-1 appearance-none w-4 h-4 rounded-xs bg-[#d0d0d0]"/><svg class="col-start-1 row-start-1 w-4 h-4 pointer-events-none"><use href="#check"/></svg></span>Export Image assets:</label>
            <button type="button" aria-label="Browse folder" class="w-[30px] h-[30px] rounded bg-[#4d4d4d] flex items-center justify-center"><svg class="w-5 h-4"><use href="#folder"/></svg></button>
            <input aria-label="Image folder" value="images/" class="ml-[9px] w-[102px] h-[30px] pl-2.5 rounded border border-[#7a7a7a] bg-[#1c1c1c]"/>
          </div>
          <div class="mt-[3px] h-[30px] flex items-center">
            <label for="exportAs" class="pl-[105px] w-[198px]">Export as:</label>
            <div class="w-[141px] relative">
              <select id="exportAs" class="w-full h-[30px] pl-[11px] appearance-none rounded border border-[#6a6a6a] bg-[#252525]"><option>Spritesheet</option></select>
              <svg class="absolute right-[11px] top-[11px] w-3 h-2 pointer-events-none"><use href="#chev"/></svg>
            </div>
          </div>
          <p class="mt-1 pl-[38px] text-[11px]">(Combine all images into spritesheet)</p>

          <div class="mt-[22px] h-8 pl-px flex items-center"><span class="w-[98px] mb-1">Format:</span>
            <label class="flex items-center gap-[11px] w-[72px]"><input type="radio" name="format" checked class="appearance-none w-4 h-4 rounded-full border-2 border-[#a8a8a8] checked:border-6 checked:border-[#d0d0d0]"/>PNG</label>
            <label class="flex items-center gap-[11px] w-[74px]"><input type="radio" name="format" class="appearance-none w-4 h-4 rounded-full border-2 border-[#a8a8a8] checked:border-6 checked:border-[#d0d0d0]"/>JPEG</label>
            <label class="flex items-center gap-[11px]"><input type="radio" name="format" class="appearance-none w-4 h-4 rounded-full border-2 border-[#a8a8a8] checked:border-6 checked:border-[#d0d0d0]"/>BOTH</label>
          </div>
          <p class="mt-[9px] h-[22px] pl-px flex items-center">PNG Settings:</p>
          <div class="mt-1.5 h-[22px] pl-px flex items-center"><span class="w-[98px] mb-1">Quality:</span>
            <label class="flex items-center gap-[11px] w-[67px]"><input type="radio" name="bits" checked class="appearance-none w-4 h-4 rounded-full border-2 border-[#a8a8a8] checked:border-6 checked:border-[#d0d0d0]"/>8 Bit</label>
            <label class="flex items-center gap-[11px] w-[76px]"><input type="radio" name="bits" class="appearance-none w-4 h-4 rounded-full border-2 border-[#a8a8a8] checked:border-6 checked:border-[#d0d0d0]"/>24 Bit</label>
            <label class="flex items-center gap-[11px]"><input type="radio" name="bits" class="appearance-none w-4 h-4 rounded-full border-2 border-[#a8a8a8] checked:border-6 checked:border-[#d0d0d0]"/>32 Bit</label>
          </div>
          <div class="mt-[11px] h-[22px] pl-px flex items-center"><label for="pngW" class="w-[90px]">Max Size:</label><input id="pngW" value="1000" class="w-[46px] text-[#6fa5dc]"/><span class="w-5">x</span><input aria-label="PNG max height" value="1000" class="w-[46px] text-[#6fa5dc]"/>px</div>
          <div class="mt-0.5 h-[22px] pl-px flex items-center"><label for="pngBg" class="w-[91px] pt-1">Background:</label><button type="button" id="pngBg"><svg class="w-[25px] h-5 rounded-xs bg-white" viewBox="0 0 25 20"><path d="M0 20L25 0" stroke="#e03c3c" stroke-width="1.300"/></svg></button></div>
          <fieldset disabled class="pl-px text-[#7e7e7e]">
            <p class="mt-[11px] h-[22px] flex items-center">JPEG Settings:</p>
            <div class="mt-[7px] h-[22px] flex items-center"><label for="jpgQ" class="w-[89px]">Quality:</label><input id="jpgQ" value="40" class="w-[46px]"/></div>
            <div class="mt-[7px] h-[22px] flex items-center"><label for="jpgW" class="w-[90px]">Max Size:</label><input id="jpgW" value="1000" class="w-[46px]"/><span class="w-5">x</span><input aria-label="JPEG max height" value="1000" class="w-[46px]"/>px</div>
            <div class="mt-0.5 h-[22px] flex items-center"><label for="jpgBg" class="w-[91px] pt-1">Background:</label><button id="jpgBg" class="w-[25px] h-5 rounded-xs bg-[#a6a6a6]"></button></div>
          </fieldset>
        </div>
      </div>

      <div class="ml-[13px] mr-3 h-[67px] shrink-0 pt-2 flex items-start justify-end gap-2.5 border-t-2 border-[#484848] font-bold text-[#ececec]">
        <button type="button" class="w-[115px] h-8 rounded-full border-2 border-[#555]">Help</button>
        <button type="button" class="ml-0.5 w-[115px] h-8 rounded-full border-2 border-[#555]">Publish</button>
        <button type="button" class="w-[115px] h-8 rounded-full bg-[#0265dc] text-white">OK</button>
        <button type="button" class="w-[115px] h-8 rounded-full border-2 border-[#555]">Cancel</button>
      </div>
    </form>
  </main>

  <!-- taskbar -->
  <footer class="h-[50px] shrink-0 flex bg-linear-to-r from-[#e8d6d8] via-[#e6d8da] to-[#dad6d1] text-black text-sm">
    <button aria-label="Start" class="w-[60px] flex items-center justify-center"><svg class="w-5 h-5" viewBox="0 0 20 20"><path d="M0 3l8.500-1.200v7.700H0zM9.500 1.600L20 0v9.500H9.500zM0 10.500h8.500v7.700L0 17zM9.500 10.500H20V20L9.500 18.400z"/></svg></button>
    <label class="w-[360px] h-full bg-white border border-[#cbc4c6] flex items-center pl-[14px]">
      <svg class="w-5 h-5" viewBox="0 0 20 20"><circle cx="12.500" cy="7.500" r="6.600" fill="none" stroke="#111" stroke-width="1.500"/><path d="M8 12.500L.8 19.300" stroke="#111" stroke-width="1.500"/></svg>
      <input placeholder="Type here to search" aria-label="Search" class="ml-[15px] w-[219px] text-lg placeholder:text-[#333]"/>
      <svg class="w-[82px] h-9" viewBox="0 0 82 36"><defs><linearGradient id="gold" y2="1"><stop stop-color="#ffd83c"/><stop offset="1" stop-color="#f2ae18"/></linearGradient></defs><path d="M29 3q2 0 2.500 3 1 6 7 8 5 1 5 3t-5 3q-6 2-7 8-.5 3-2.500 3t-2.500-3q-1-6-7-8-5-1-5-3t5-3q6-2 7-8 .5-3 2.500-3z" fill="url(#gold)"/><path d="M57 15q1 0 1.500 2.500.5 3 5.500 4.500-5 1-5.500 4t-1.500 3q-1 0-1.500-3t-5-4q4.500-1.500 5-4.500.5-2.500 1.500-2.500z" fill="#f5b92a"/><path d="M5 23l2 4 4 .5-3.500 3 .5 4.500-4-3-4 1.500 1.500-4-2.500-3 4 .3z" fill="#12a3e6"/><circle cx="49.500" cy="5" r="2.600" fill="#e2632e"/><circle cx="72.500" cy="29.500" r="2.600" fill="#87bd48"/></svg>
    </label>
    <nav class="ml-[3px] flex *:w-[62px] *:h-full *:px-1.5 *:flex *:flex-col *:items-center *:justify-between">
      <a href="#" aria-label="Copilot"><svg class="mt-2.5 w-[30px] h-7" viewBox="0 0 30 28"><defs><linearGradient id="cpA" y2="1"><stop stop-color="#1796e0"/><stop offset=".55" stop-color="#3dae6a"/><stop offset="1" stop-color="#f2d21c"/></linearGradient><linearGradient id="cpB" y2="1"><stop stop-color="#a65be8"/><stop offset=".5" stop-color="#e8549c"/><stop offset="1" stop-color="#f79a4c"/></linearGradient></defs><path d="M9 1h9q3 0 4 4l1 3h-5q-2 0-3 3l-3 8q-1 2-3 2H4q-5 0-3.500-6L4 5q1.500-4 5-4z" fill="url(#cpA)"/><path d="M21 27h-9q-3 0-4-4l-1-2h5q2 0 3-3l3-8q1-2 3-2h5q5 0 3.500 6L26 23q-1.500 4-5 4z" fill="url(#cpB)"/><path d="M15 1h3q3 0 4 4l1 3h-6q0-5-2-7z" fill="#1c3fc0"/></svg></a>
      <a href="#" aria-label="File Explorer"><svg class="mt-3 w-7 h-6" viewBox="0 0 28 24"><path d="M0 1h12l2 3H0z" fill="#d9980e"/><path d="M0 4h28v19H0z" fill="#fcd65c"/><path d="M5 24V13h18v11h-4v-6H9v6z" fill="#3e8dd0"/></svg><span class="w-full h-[3px] bg-linear-to-r from-[#1173c6] from-80% to-[#6ea8dc] to-80%"></span></a>
      <a href="#" aria-label="Photoshop" class="bg-[#f9b07a]"><svg class="mt-[9px] w-7 h-7" viewBox="0 0 28 28"><rect width="28" height="27" y=".5" rx="5" fill="#001d33"/><text x="14" y="19" text-anchor="middle" font-size="15" font-weight="700" fill="#35a5fa">Ps</text></svg><span class="w-[62px] h-[3px] bg-[#f97a0e]"></span></a>
      <a href="#" aria-label="Acrobat"><svg class="mt-[9px] w-7 h-7" viewBox="0 0 28 28"><rect width="28" height="27" y=".5" rx="5" fill="#b30b00"/><path d="M13 6q2-1.500 2 2-.5 4-3 8.500t-4.500 5q-2 0-.5-2 3-3 8-4 6-1 6.500.5 0 2.500-4.500.5-4-3-5-7-.5-3 1-3.500z" fill="none" stroke="#fff" stroke-width="1.500"/></svg><span class="w-full h-[3px] bg-linear-to-r from-[#1173c6] from-80% to-[#6ea8dc] to-80%"></span></a>
      <a href="#" aria-label="Chrome"><svg class="mt-[9px] ml-0.5 w-8 h-8" viewBox="0 0 32 32"><circle cx="15" cy="15" r="14.500" fill="#fbc31b"/><path d="M15 15L2.400 7.800A14.500 14.500 0 0127.600 8H15z" fill="#e03c2f"/><path d="M15 15l-3 14.200A14.500 14.500 0 012.400 7.800z" fill="#23984a"/><circle cx="15" cy="15" r="6.800" fill="#fff"/><circle cx="15" cy="15" r="5.300" fill="#3f7fe8"/><circle cx="22.500" cy="22" r="9.500" fill="#0b5a92"/><text x="22.500" y="26" text-anchor="middle" font-size="11" fill="#cfe4f2">J</text></svg><span class="w-full h-[3px] bg-[#1173c6]"></span></a>
      <a href="#" aria-label="InDesign"><svg class="mt-[9px] w-7 h-7" viewBox="0 0 28 28"><rect width="28" height="27" y=".5" rx="5" fill="#470420"/><text x="14" y="19" text-anchor="middle" font-size="15" font-weight="700" fill="#f8356c">Id</text></svg><span class="w-full h-[3px] bg-[#1173c6]"></span></a>
      <a href="#" aria-label="Word"><svg class="mt-2.5 w-7 h-7" viewBox="0 0 28 28"><path d="M14 4h13v20H14z" fill="#fff" stroke="#2a5699" stroke-width="1.500"/><path d="M17 8h7M17 11h7M17 14h7M17 17h7M17 20h7" stroke="#2a5699" stroke-width="1.500"/><path d="M0 4l16-3.500v27L0 24z" fill="#2a5699"/><text x="8" y="18.500" text-anchor="middle" font-size="12" font-weight="700" fill="#fff">W</text></svg><span class="w-full h-[3px] bg-linear-to-r from-[#1173c6] from-80% to-[#6ea8dc] to-80%"></span></a>
      <a href="#" aria-label="7-Zip"><svg class="mt-3 w-7 h-6" viewBox="0 0 28 24"><path d="M1 3h26v19H1z" fill="#fff" stroke="#000" stroke-width="2"/><path d="M4 6h11v13H4z"/><text x="9.500" y="17" text-anchor="middle" font-size="12" font-weight="800" fill="#fff">7</text><text x="20" y="19" text-anchor="middle" font-size="13" font-weight="800">z</text></svg><span class="w-full h-[3px] bg-[#1173c6]"></span></a>
      <a href="#" aria-label="Font viewer"><svg class="mt-2.5 w-7 h-7 overflow-visible" viewBox="0 0 28 28"><text x="12" y="24" text-anchor="middle" font-size="30" font-weight="700" font-family="Liberation Serif" fill="#5a52c8">A</text><circle cx="18" cy="14" r="6" fill="#dfe6f2" fill-opacity=".9" stroke="#9a9aa6" stroke-width="1.500"/><path d="M14 19l-6 8" stroke="#8a8a90" stroke-width="3"/></svg><span class="w-full h-[3px] bg-[#1173c6]"></span></a>
      <a href="#" aria-label="Photos"><svg class="mt-[11px] w-[26px] h-[26px]" viewBox="0 0 26 26"><defs><linearGradient id="ph" x2="1"><stop stop-color="#1a8ad8"/><stop offset="1" stop-color="#5b55b4"/></linearGradient></defs><rect width="26" height="26" rx="4" fill="url(#ph)"/><path d="M0 21L10 10q2.500-2 5 0l11 11v1q0 4-4 4H4q-4 0-4-4z" fill="#30bff2"/><path d="M7 26l8-8q2-1 4 0l7 5q-1 3-4 3z" fill="#1789d8"/><circle cx="20" cy="5" r="2.500" fill="#fff"/></svg><span class="w-full h-[3px] bg-linear-to-r from-[#1173c6] from-80% to-[#6ea8dc] to-80%"></span></a>
      <a href="#" aria-label="Creative Cloud"><svg class="mt-2.5 w-7 h-7" viewBox="0 0 28 28"><defs><linearGradient id="ccA" x2="1"><stop stop-color="#e83ac0"/><stop offset=".35" stop-color="#f2362c"/><stop offset="1" stop-color="#f8b21c"/></linearGradient><linearGradient id="ccB" x2="1"><stop stop-color="#8a5cf0"/><stop offset=".5" stop-color="#3e9cf0"/><stop offset="1" stop-color="#4cc83c"/></linearGradient><linearGradient id="ccM" x2="0" y2="1"><stop offset=".4" stop-color="#fff" stop-opacity="0"/><stop offset="1" stop-color="#fff"/></linearGradient><mask id="ccMask"><rect width="28" height="28" fill="url(#ccM)"/></mask></defs><rect width="28" height="28" rx="5" fill="url(#ccA)"/><rect width="28" height="28" rx="5" fill="url(#ccB)" mask="url(#ccMask)"/><path d="M19 19.500H9.500a5.500 5.500 0 113-10q4-3 7.500-1 4.500 3 3 7.500-1.500 3.500-5.500 3.500-2.500 0-5-3l-2-2M17 17l-4-4q-3-2-5.500 0t0 4.500q2 1.500 5 .5M14 11.500q3.500-3 6 0t0 4.500" fill="none" stroke="#fff" stroke-width="1.600"/></svg><span class="w-full h-[3px] bg-[#1173c6]"></span></a>
      <a href="#" aria-label="Animate" class="bg-[#f4eef0]"><svg class="mt-[9px] w-7 h-7" viewBox="0 0 28 28"><rect width="28" height="27" y=".5" rx="5" fill="#00005b"/><text x="14" y="19" text-anchor="middle" font-size="15" font-weight="700" fill="#9a99ff">An</text></svg><span class="w-[62px] h-[3px] bg-[#1173c6]"></span></a>
      <a href="#" aria-label="Illustrator"><svg class="mt-[9px] w-7 h-7" viewBox="0 0 28 28"><rect width="28" height="27" y=".5" rx="5" fill="#330000"/><text x="14" y="19" text-anchor="middle" font-size="15" font-weight="700" fill="#ff9a00">Ai</text></svg><span class="w-full h-[3px] bg-[#1173c6]"></span></a>
    </nav>
    <div class="ml-auto flex items-center">
      <svg class="w-4 h-[9px]" viewBox="0 0 16 9"><path d="M.7 8.300L8 1l7.300 7.300" fill="none" stroke="#111" stroke-width="1.400"/></svg>
      <svg class="ml-3 w-5 h-5" viewBox="0 0 20 20"><path d="M14 17.500L1 16V3l18-2v9" fill="none" stroke="#111" stroke-width="1.400"/><path d="M6 9q1-4 5-3l2 1.500V4.500M13 10q-1 4-5 3l-2-1.500v3" fill="none" stroke="#111" stroke-width="1.300"/><circle cx="15.500" cy="15.500" r="4.500" fill="#2a70bc"/></svg>
      <svg class="ml-[11px] w-[19px] h-3" viewBox="0 0 19 12"><path d="M.7.700h16v10.600H.7zM18 4v4" fill="none" stroke="#111" stroke-width="1.400"/><path d="M2.500 2.500h8v7h-8z"/></svg>
      <svg class="ml-2.5 w-5 h-4" viewBox="0 0 20 16"><path d="M1 5.500h3L8 1.500v13l-4-4H1z" fill="none" stroke="#111" stroke-width="1.300"/><path d="M10.500 5.500q2 2.500 0 5M13 3.500q3.500 4.500 0 9" fill="none" stroke="#111" stroke-width="1.200"/><path d="M16 1q5 7 0 14" fill="none" stroke="#999" stroke-width="1.200"/></svg>
      <svg class="ml-2.5 w-[21px] h-[18px]" viewBox="0 0 21 18"><path d="M5 14a4.500 4.500 0 010-9q2-4.500 6-4t5 5q4 1 3.500 4.500T15 14z" fill="#0f7ad0"/><circle cx="15" cy="12" r="5.700" fill="#1264b4"/><path d="M15 11v4M15 8.300v1.500" stroke="#fff" stroke-width="1.700"/></svg>
      <button class="ml-3">ENG</button>
      <button class="ml-4 leading-[23px] text-center">22:15<br/>05/06/2025</button>
      <button aria-label="4 notifications" class="ml-[25px] relative w-[30px] h-[31px]"><svg class="w-5 h-5 mb-2" viewBox="0 0 20 20"><path d="M0 0h20v16h-8l-4 4v-4H0z"/><path d="M3.500 4.500h13M3.500 8h13M3.500 11.500h9" stroke="#ddd" stroke-width="1.300"/></svg><span class="absolute right-0 bottom-0 w-5 h-5 rounded-full border border-[#777] bg-[#d8d5d2] text-xs leading-[18px] font-semibold">4</span></button>
      <div class="ml-[15px] mr-[5px] w-px h-full bg-[#b4b0ae]"></div>
    </div>
  </footer>

  <script>
    // frame numbers and second marks on the ruler, 15px per frame
    const ruler = document.getElementById('ruler');
    let marks = '';
    for (let f = 5; f <= 75; f += 5) marks += `<text x="${(f - 1) * 15 + 1}" y="38" font-size="12" fill="#9a9a9a">${f}</text>`;
    for (let s = 1; s <= 3; s++) marks += `<text x="${(s * 24 - 1) * 15 + 3}" y="16" font-size="13" font-style="italic" fill="#9a9a9a">${s}s</text>`;
    ruler.insertAdjacentHTML('beforeend', marks);
  </script>
</body>
</html>
